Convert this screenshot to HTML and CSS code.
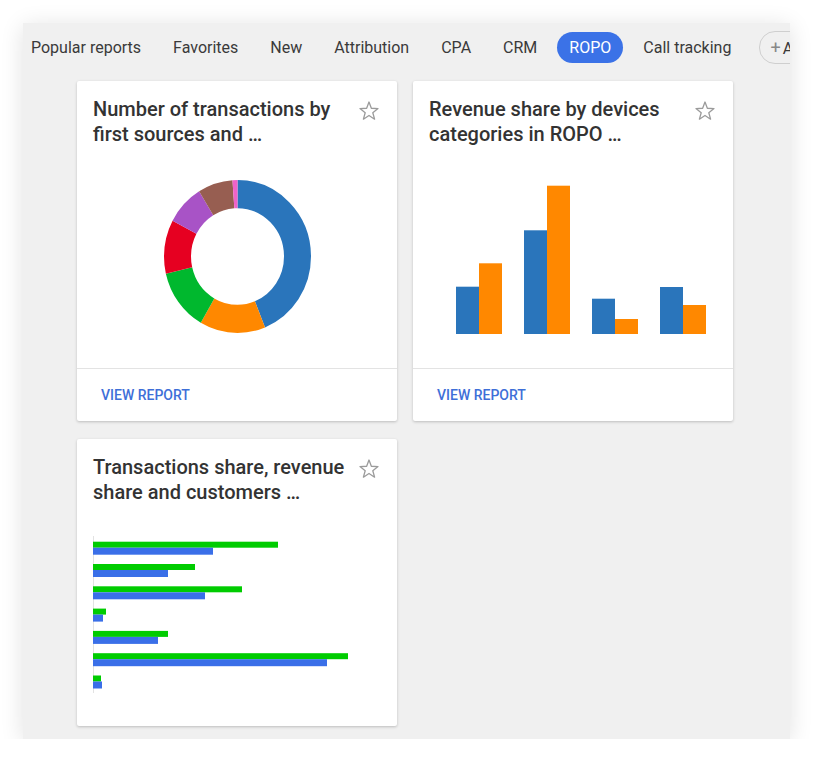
FILE: index.html
```html
<!doctype html>
<html>
	<head>
		<title>Reports</title>
		<meta charset="UTF-8">
		<link rel="stylesheet" href="styles.css">
	</head>
	<body>
		<div class="panel">
			<div class="tabs">
				<span class="tab">Popular reports</span>
				<span class="tab">Favorites</span>
				<span class="tab">New</span>
				<span class="tab">Attribution</span>
				<span class="tab">CPA</span>
				<span class="tab">CRM</span>
				<span class="tab active">ROPO</span>
				<span class="tab">Call tracking</span>
				<span class="tab add"><span class="plus">+</span>Add tag</span>
			</div>
			<div class="grid">
				<div class="card">
					<div class="card-head">
						<div class="title">Number of transactions by first sources and …</div>
						<svg class="star" width="24" height="24" viewBox="0 0 24 24"><polygon points="12,3 14.35,9.26 21.03,9.56 15.8,13.74 17.59,20.19 12,16.5 6.41,20.19 8.2,13.74 2.97,9.56 9.65,9.26"/></svg>
					</div>
					<div class="chart">
						<svg width="320" height="221" viewBox="0 0 320 221">
							<g transform="translate(160.5 109.5) scale(1 1.04) rotate(-90)" fill="none" stroke-width="27">
								<circle r="60" pathLength="360" stroke="#2a75bb" stroke-dasharray="158 360" stroke-dashoffset="0"/>
								<circle r="60" pathLength="360" stroke="#ff8800" stroke-dasharray="52 360" stroke-dashoffset="-158"/>
								<circle r="60" pathLength="360" stroke="#00b82e" stroke-dasharray="47 360" stroke-dashoffset="-210"/>
								<circle r="60" pathLength="360" stroke="#e60021" stroke-dasharray="41 360" stroke-dashoffset="-257"/>
								<circle r="60" pathLength="360" stroke="#a853c6" stroke-dasharray="30.5 360" stroke-dashoffset="-298"/>
								<circle r="60" pathLength="360" stroke="#975e51" stroke-dasharray="27.5 360" stroke-dashoffset="-328.5"/>
								<circle r="60" pathLength="360" stroke="#f063c9" stroke-dasharray="4 360" stroke-dashoffset="-356"/>
							</g>
						</svg>
					</div>
					<div class="card-foot"><span class="link">View report</span></div>
				</div>
				<div class="card">
					<div class="card-head">
						<div class="title">Revenue share by devices categories in ROPO …</div>
						<svg class="star" width="24" height="24" viewBox="0 0 24 24"><polygon points="12,3 14.35,9.26 21.03,9.56 15.8,13.74 17.59,20.19 12,16.5 6.41,20.19 8.2,13.74 2.97,9.56 9.65,9.26"/></svg>
					</div>
					<div class="chart">
						<svg width="320" height="221" viewBox="0 0 320 221">
							<g class="blue">
								<rect x="43" y="139.7" width="23" height="47.3"/>
								<rect x="111" y="83.3" width="23" height="103.7"/>
								<rect x="179" y="151.7" width="23" height="35.3"/>
								<rect x="247" y="140" width="23" height="47"/>
							</g>
							<g class="orange">
								<rect x="66" y="116.3" width="23" height="70.7"/>
								<rect x="134" y="38.7" width="23" height="148.3"/>
								<rect x="202" y="172" width="23" height="15"/>
								<rect x="270" y="158" width="23" height="29"/>
							</g>
						</svg>
					</div>
					<div class="card-foot"><span class="link">View report</span></div>
				</div>
				<div class="card">
					<div class="card-head">
						<div class="title">Transactions share, revenue share and customers …</div>
						<svg class="star" width="24" height="24" viewBox="0 0 24 24"><polygon points="12,3 14.35,9.26 21.03,9.56 15.8,13.74 17.59,20.19 12,16.5 6.41,20.19 8.2,13.74 2.97,9.56 9.65,9.26"/></svg>
					</div>
					<div class="chart">
						<svg width="320" height="221" viewBox="0 0 320 221">
							<line x1="16.5" y1="31" x2="16.5" y2="188" stroke="#e2e2e2"/>
							<g class="green">
								<rect x="16" y="36.7" width="185" height="6"/>
								<rect x="16" y="59" width="102" height="6"/>
								<rect x="16" y="81.3" width="149" height="6"/>
								<rect x="16" y="103.6" width="13" height="6"/>
								<rect x="16" y="125.9" width="75" height="6"/>
								<rect x="16" y="148.2" width="255" height="6"/>
								<rect x="16" y="170.5" width="8" height="6"/>
							</g>
							<g class="hblue">
								<rect x="16" y="42.7" width="120" height="7"/>
								<rect x="16" y="65" width="75" height="7"/>
								<rect x="16" y="87.3" width="112" height="7"/>
								<rect x="16" y="109.6" width="10" height="7"/>
								<rect x="16" y="131.9" width="65" height="7"/>
								<rect x="16" y="154.2" width="234" height="7"/>
								<rect x="16" y="176.5" width="9" height="7"/>
							</g>
						</svg>
					</div>
				</div>
			</div>
		</div>
	</body>
</html>
```
FILE: styles.css
```css
body {
	margin: 0;
	background: #fff;
	font-family: Roboto, "Noto Sans", sans-serif;
}
.panel {
	margin: 23px 0 0 23px;
	width: 767px;
	height: 716px;
	background: #f0f0f0;
	overflow: hidden;
	box-shadow: 0 3px 22px rgba(0, 0, 0, 0.12);
}
.tabs {
	display: flex;
	align-items: center;
	gap: 8px;
	height: 31px;
	margin-left: -4px;
	padding-top: 9px;
	white-space: nowrap;
}
.tab {
	flex: none;
	height: 31px;
	line-height: 31px;
	padding: 0 12px;
	border-radius: 16px;
	font-size: 16px;
	color: #3a3a3a;
}
.tab.active {
	background: #3b72e7;
	color: #fff;
}
.tab.add {
	box-sizing: border-box;
	height: 33px;
	line-height: 31px;
	margin-left: 8px;
	padding: 0 12px 0 10px;
	border: 1px solid #cfcfcf;
}
.plus {
	color: #888;
	font-size: 18px;
	margin-right: 2px;
}
.grid {
	display: grid;
	grid-template-columns: 320px 320px;
	gap: 18px 16px;
	align-items: start;
	padding: 18px 0 0 54px;
}
.card {
	background: #fff;
	border-radius: 2px;
	box-shadow: 0 1px 3px rgba(0, 0, 0, 0.22);
}
.card-head {
	display: flex;
	gap: 8px;
	padding: 16px 16px 0 16px;
	height: 50px;
}
.title {
	flex: 1;
	font-size: 20px;
	line-height: 25px;
	font-weight: 500;
	color: #333;
}
.star {
	flex: none;
	margin-top: 2px;
	fill: none;
	stroke: #9b9b9b;
	stroke-width: 1.3;
	stroke-linejoin: round;
}
.chart {
	height: 221px;
}
.chart svg {
	display: block;
}
.blue rect {
	fill: #2a75bb;
}
.orange rect {
	fill: #ff8800;
}
.green rect {
	fill: #00cc00;
}
.hblue rect {
	fill: #3a6fe8;
}
.card-foot {
	display: flex;
	align-items: center;
	height: 52px;
	padding-left: 24px;
	border-top: 1px solid #e3e3e3;
}
.link {
	font-size: 14px;
	font-weight: 500;
	text-transform: uppercase;
	color: #3e6fd8;
}
```
